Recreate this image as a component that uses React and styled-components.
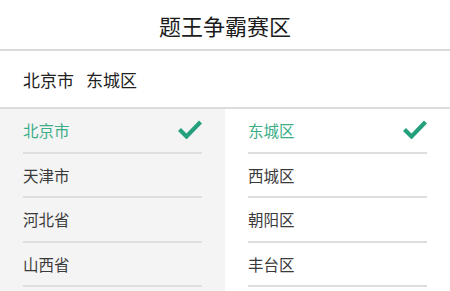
import React, { useState } from 'react'
import styled, { createGlobalStyle } from 'styled-components'

const provinces = ['北京市', '天津市', '河北省', '山西省']
const districts = ['东城区', '西城区', '朝阳区', '丰台区']

const GlobalStyle = createGlobalStyle`
  html, body {
    margin: 0;
    padding: 0;
    background: #fff;
    overflow: hidden;
  }
  body {
    font-family: "Noto Sans CJK SC", "Noto Sans", sans-serif;
    color: #333;
  }
`

const Page = styled.div`
  width: 450px;
  height: 291px;
  display: flex;
  flex-direction: column;
  overflow: hidden;
`

const Header = styled.div`
  height: 49px;
  display: flex;
  align-items: center;
  justify-content: center;
  font-size: 22px;
  color: #1c1c1c;
  border-bottom: 2px solid #d9d9d9;
  flex-shrink: 0;
`

const Current = styled.div`
  height: 56px;
  display: flex;
  align-items: center;
  padding: 0 23px;
  font-size: 17px;
  color: #222;
  border-bottom: 2px solid #dcdcdc;
  flex-shrink: 0;

  span + span {
    margin-left: 12px;
  }
`

const Columns = styled.div`
  flex: 1;
  display: grid;
  grid-template-columns: 225px 225px;
  min-height: 0;
`

const Column = styled.div`
  background: ${({ $shade }) => ($shade ? '#f4f4f4' : '#fff')};
  padding: 0 23px;
  overflow: hidden;
`

const Row = styled.div`
  height: 42.5px;
  display: flex;
  align-items: center;
  justify-content: space-between;
  border-bottom: 2px solid #dedede;
  font-size: 15.5px;
  color: ${({ $active }) => ($active ? '#3bae88' : '#3a3a3a')};
  cursor: pointer;
`

const Tick = styled.svg`
  width: 24px;
  height: 19px;
  margin-top: -2px;
  color: #25a07c;
`

const Check = () => (
  <Tick viewBox="0 0 24 19">
    <path d="M1.5 9.5 L8.5 16.5 L22.5 2" fill="none" stroke="currentColor" strokeWidth="4.2" />
  </Tick>
)

const List = ({ items, value, onPick, shade }) => (
  <Column $shade={shade}>
    {items.map((name) => (
      <Row key={name} $active={name === value} onClick={() => onPick(name)}>
        <span>{name}</span>
        {name === value && <Check />}
      </Row>
    ))}
  </Column>
)

export default function App() {
  const [province, setProvince] = useState('北京市')
  const [district, setDistrict] = useState('东城区')

  return (
    <Page>
      <GlobalStyle />
      <Header>题王争霸赛区</Header>
      <Current>
        <span>{province}</span>
        <span>{district}</span>
      </Current>
      <Columns>
        <List items={provinces} value={province} onPick={setProvince} shade />
        <List items={districts} value={district} onPick={setDistrict} />
      </Columns>
    </Page>
  )
}
